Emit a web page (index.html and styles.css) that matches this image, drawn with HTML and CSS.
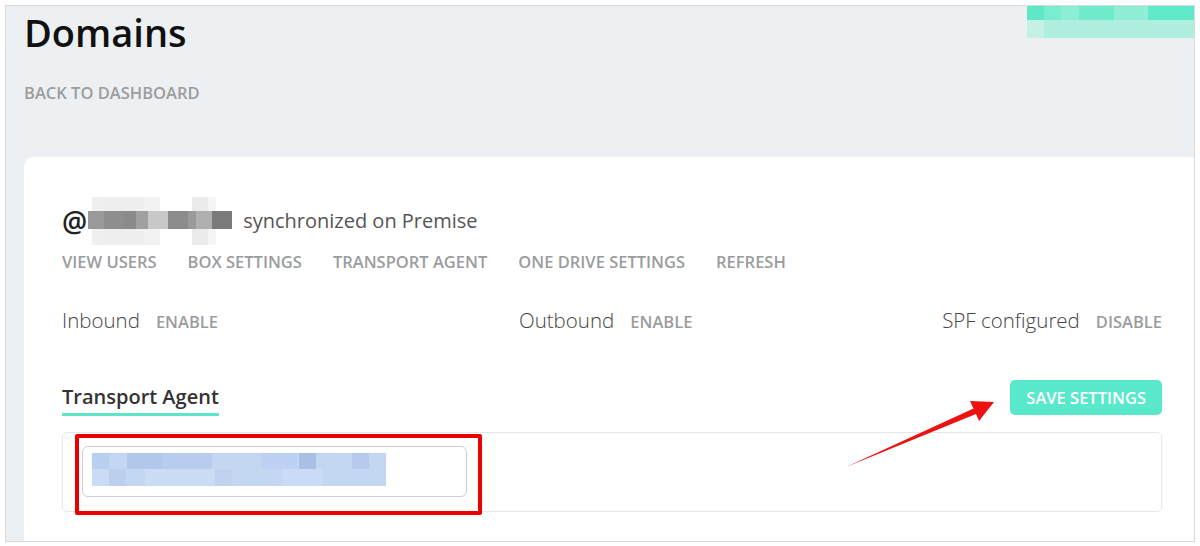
FILE: index.html
```html
<!DOCTYPE html>
<html>
<head>
<meta charset="utf-8">
<link rel="stylesheet" href="styles.css">
</head>
<body>
<div class="frame">
  <div class="topblob"></div>
  <h1 class="title">Domains</h1>
  <a class="back">BACK TO DASHBOARD</a>
  <div class="card">
    <div class="domain-row">
      <span class="at">@</span>
      <svg class="blur-name" width="144" height="48" viewBox="0 0 144 48">
        <rect x="4" y="0" width="12" height="48" fill="#f0f0f0"/>
        <rect x="16" y="0" width="40" height="48" fill="#eeeeee"/>
        <rect x="56" y="0" width="16" height="48" fill="#f2f2f2"/>
        <rect x="104" y="0" width="16" height="48" fill="#ebebeb"/>
        <rect x="120" y="0" width="8" height="48" fill="#f5f5f5"/>
        <rect x="0" y="14" width="16" height="18" fill="#9a9a9a"/>
        <rect x="16" y="14" width="20" height="18" fill="#8e8e8e"/>
        <rect x="36" y="14" width="12" height="18" fill="#8a8a8a"/>
        <rect x="48" y="14" width="12" height="18" fill="#a0a0a0"/>
        <rect x="60" y="14" width="20" height="18" fill="#c8c8c8"/>
        <rect x="80" y="14" width="20" height="18" fill="#8c8c8c"/>
        <rect x="100" y="14" width="8" height="18" fill="#9a9a9a"/>
        <rect x="108" y="14" width="16" height="18" fill="#b0b0b0"/>
        <rect x="124" y="14" width="20" height="18" fill="#7a7a7a"/>
      </svg>
      <span class="sync">synchronized on Premise</span>
    </div>
    <nav class="tabs">
      <a>VIEW USERS</a>
      <a>BOX SETTINGS</a>
      <a>TRANSPORT AGENT</a>
      <a>ONE DRIVE SETTINGS</a>
      <a>REFRESH</a>
    </nav>
    <div class="status">
      <div class="stat"><span class="label">Inbound</span><a class="act">ENABLE</a></div>
      <div class="stat"><span class="label">Outbound</span><a class="act">ENABLE</a></div>
      <div class="stat right"><span class="label">SPF configured</span><a class="act">DISABLE</a></div>
    </div>
    <div class="section-head">
      <h2 class="section-title">Transport Agent</h2>
      <button class="save">SAVE SETTINGS</button>
    </div>
    <div class="box">
      <div class="input">
        <svg class="blur-input" width="294" height="33" viewBox="0 0 294 33">
          <rect x="0" y="0" width="294" height="33" fill="#c3d6f2"/>
          <rect x="0" y="0" width="17" height="16" fill="#b9cff0"/>
          <rect x="35" y="0" width="35" height="16" fill="#b2c8ea"/>
          <rect x="70" y="0" width="50" height="16" fill="#b8cdee"/>
          <rect x="170" y="0" width="35" height="16" fill="#bdd2f2"/>
          <rect x="207" y="0" width="17" height="16" fill="#a9c0e4"/>
          <rect x="260" y="0" width="17" height="16" fill="#b6cbec"/>
          <rect x="0" y="16" width="17" height="17" fill="#cadcf5"/>
          <rect x="17" y="16" width="17" height="17" fill="#bccfee"/>
          <rect x="53" y="16" width="70" height="17" fill="#cbdcf5"/>
          <rect x="123" y="16" width="17" height="17" fill="#c0d2ee"/>
          <rect x="190" y="16" width="40" height="17" fill="#c9dbf5"/>
        </svg>
      </div>
      <div class="highlight"></div>
    </div>
  </div>
</div>
<svg class="arrow" width="1200" height="546" viewBox="0 0 1200 546">
  <polygon points="846,467 973.5,408.5 970,401 994,402 979,421 976,414" fill="#ee1111"/>
</svg>
</body>
</html>
```
FILE: styles.css
```css
* { box-sizing: border-box; }
html, body { margin: 0; padding: 0; background: #ffffff; }
body {
  width: 1200px;
  height: 546px;
  position: relative;
  overflow: hidden;
  font-family: "Open Sans", "Noto Sans", sans-serif;
  padding: 5px;
}
.frame {
  position: relative;
  width: 1190px;
  height: 537px;
  border: 1px solid #d6d9db;
  background: #edf0f2;
  overflow: hidden;
  padding-left: 18px;
}
.topblob {
  position: absolute;
  top: 0;
  right: 0;
  width: 167px;
  height: 32px;
  background:
    linear-gradient(to right, #5fe8c8 0 17px, #7aeccf 17px 34px, #8deed6 34px 52px, #6febcc 52px 87px, #8eeed6 87px 121px, #5fe9c9 121px 167px) top / 100% 14px no-repeat,
    linear-gradient(to right, #c3f1e6 0 17px, #b0eedf 17px 167px) bottom / 100% 18px no-repeat;
}
.title {
  margin: 0;
  font-size: 38px;
  font-weight: 600;
  line-height: 52px;
  color: #111;
  letter-spacing: 0;
}
.back {
  display: block;
  margin-top: 24px;
  font-size: 16.5px;
  font-weight: 600;
  line-height: 22px;
  color: #9a9c9e;
}
.card {
  margin-top: 53px;
  margin-right: -10px;
  background: #ffffff;
  border-radius: 10px 0 0 0;
  height: 400px;
  padding: 40px 42px 0 38px;
}
.domain-row {
  display: flex;
  align-items: center;
  height: 48px;
}
.at {
  font-size: 28px;
  font-weight: 600;
  color: #222;
  line-height: 30px;
  margin-right: 1px;
}
.blur-name { display: block; }
.sync {
  margin-left: 11px;
  font-size: 20px;
  font-weight: 400;
  color: #555;
  line-height: 28px;
}
.tabs {
  display: flex;
  gap: 31px;
  margin-top: 6px;
}
.tabs a, .act {
  font-size: 16.5px;
  font-weight: 600;
  color: #9a9c9e;
  line-height: 22px;
}
.status {
  display: grid;
  grid-template-columns: 457px 1fr auto;
  align-items: baseline;
  margin-top: 33px;
}
.stat { display: flex; align-items: baseline; gap: 16px; }
.label {
  font-size: 20.5px;
  font-weight: 300;
  color: #444;
  line-height: 28px;
}
.act { font-size: 16.5px; }
.section-head {
  display: flex;
  justify-content: space-between;
  align-items: center;
  margin-top: 45px;
}
.section-title {
  margin: 0;
  font-size: 20px;
  font-weight: 600;
  color: #333;
  line-height: 28px;
  padding-bottom: 2px;
  border-bottom: 3px solid #5fe6c8;
  margin-top: 4px;
}
.save {
  background: #5ae8cb;
  border: none;
  border-radius: 5px;
  color: #ffffff;
  font-family: "Open Sans", "Noto Sans", sans-serif;
  font-size: 16.5px;
  font-weight: 600;
  height: 35px;
  padding: 0 16px;
}
.box {
  position: relative;
  margin-top: 16px;
  height: 80px;
  border: 1px solid #e4e6e8;
  border-radius: 5px;
  padding: 13px 0 0 19px;
}
.input {
  width: 385px;
  height: 51px;
  border: 1px solid #cfcfcf;
  border-radius: 6px;
  padding: 6px 0 0 9px;
}
.blur-input { display: block; }
.highlight {
  position: absolute;
  left: 12px;
  top: 1px;
  width: 407px;
  height: 81px;
  border: 4px solid #ea0000;
  border-radius: 2px;
}
.arrow {
  position: absolute;
  left: 0;
  top: 0;
  pointer-events: none;
}
```
